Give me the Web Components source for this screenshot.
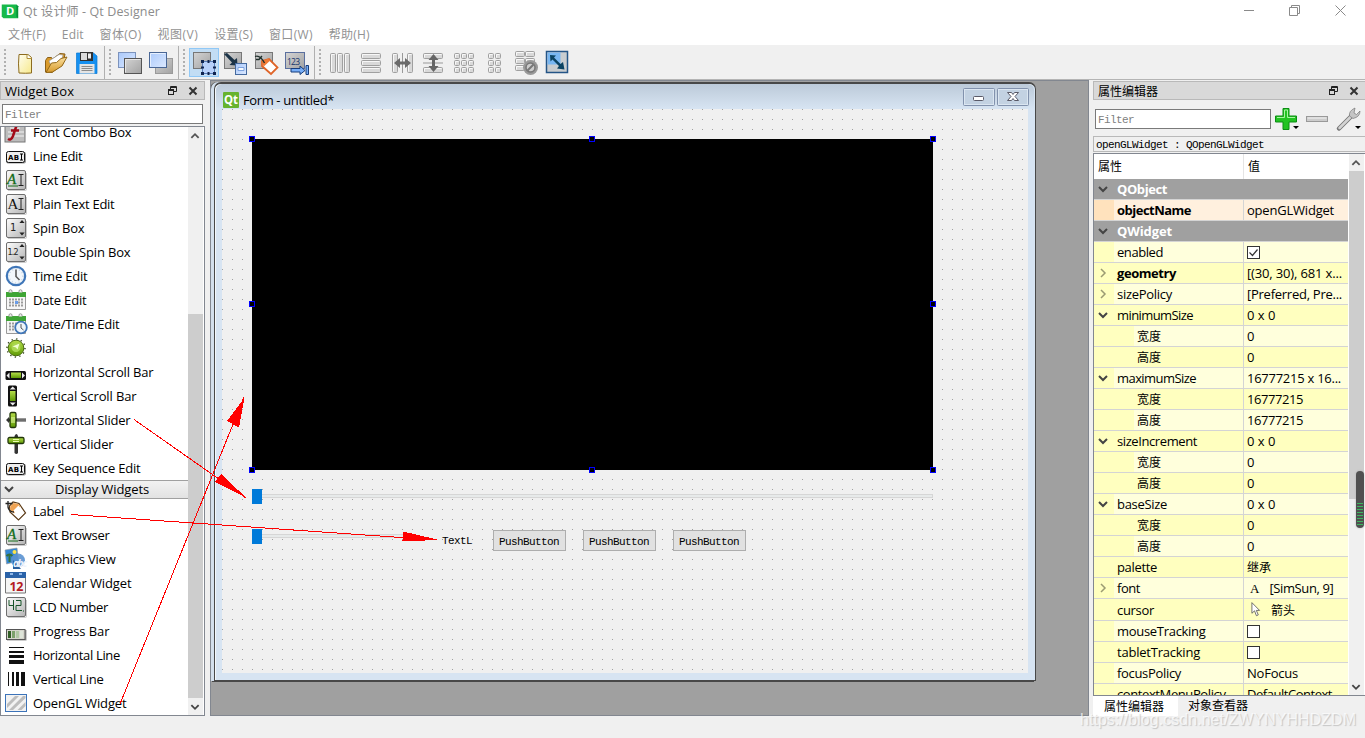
<!DOCTYPE html>
<html lang="zh">
<head>
<meta charset="utf-8">
<title>Qt 设计师 - Qt Designer</title>
<style>
  html, body { margin: 0; height: 100%; overflow: hidden; background: #f0f0f0; }
  body {
    font: 13px/1 "Open Sans", "Noto Sans CJK SC", sans-serif;
    color: #000;
  }
</style>
</head>
<body>
<designer-app></designer-app>

<script>
const DEFS = `<defs>
  <linearGradient id="g" x1="0" y1="0" x2="1" y2="1"><stop offset="0" stop-color="#fdfdfd"/><stop offset="1" stop-color="#b4b4b4"/></linearGradient>
  <linearGradient id="d" x1="0" y1="0" x2="1" y2="1"><stop offset="0" stop-color="#d4d4d4"/><stop offset="1" stop-color="#a2a2a2"/></linearGradient>
  <linearGradient id="b" x1="0" y1="0" x2="1" y2="1"><stop offset="0" stop-color="#aac9fb"/><stop offset="1" stop-color="#dce9ff"/></linearGradient>
  <linearGradient id="y" x1="0" y1="0" x2="1" y2="1"><stop offset="0" stop-color="#fffef0"/><stop offset="1" stop-color="#f7e98c"/></linearGradient>
  <linearGradient id="o" x1="0" y1="0" x2="0" y2="1"><stop offset="0" stop-color="#fbe0a0"/><stop offset="1" stop-color="#d79a2c"/></linearGradient>
  <linearGradient id="n" x1="0" y1="0" x2="0" y2="1"><stop offset="0" stop-color="#b6de4a"/><stop offset="1" stop-color="#5f9a06"/></linearGradient>
</defs>`;

const tile = '<rect x="1.5" y="1.5" width="19" height="19" rx="1.5" fill="url(#g)" stroke="#6e6e6e"/><path d="M3 21.5h17.5q1 0 1-1V4" fill="none" stroke="#aaa" opacity=".6"/>';
const abi = '<rect x="1" y="7" width="20" height="11.5" rx="2" fill="#999"/><rect x="1.5" y="6.5" width="18" height="11" rx="2" fill="#eee" stroke="#111"/><text x="3" y="14.800" font-family="DejaVu Sans" font-weight="bold" font-size="7" textLength="11">AB</text><path d="M15 9h3M15 15h3M16.5 9v6" stroke="#000" fill="none"/>';
const spin = '<path d="M17 3l2.6 3h-5.2zM17 18.600l2.600-3h-5.200z" fill="#222"/>';
const ibeam = '<path d="M13.500 5.500h5M13.500 16.500h5M16 5.500v11" stroke="#222" fill="none"/>';
const dateGrid = '<path d="M1.500 6h19v14.500h-19z" fill="#f6f6f6" stroke="#999"/><path d="M1 3h20v5H1z" fill="#3fa535"/><path d="M4 3.500v-2q1.500-1.500 3 0v2M14 3.500v-2q1.500-1.500 3 0v2" fill="#eee" stroke="#999"/><path d="M4 10.500h15M4 13.500h15M4 16.500h15" stroke="#9a9a9a" stroke-width="2" stroke-dasharray="2 1"/>';

function bars(rects) {
  return rects.map(([x, y, w, h]) => `<rect x="${x + .5}" y="${y + .5}" width="${w - 1}" height="${h - 1}" rx="1" fill="#d9d9d9" stroke="#a0a0a0"/><path d="M${x + 1.5} ${y + h - 1.5}V${y + 1.5}h${w - 3}" fill="none" stroke="#f7f7f7"/>`).join("");
}
function grid(cols, rows, w, h, px, py, ox, oy) {
  const out = [];
  for (let r = 0; r < rows; r++) for (let c = 0; c < cols; c++) out.push([ox + c * px, oy + r * py, w, h]);
  return bars(out);
}

// every glyph is drawn on a 22 x 22 grid
const ICONS = {
  logo: '<path d="M2 4h17l2 2v14h-17l-2-2z" fill="#17b94a"/><path d="M19 4l2 2v14l-2-2z" fill="#079137"/><text x="7" y="16" fill="#fff" font-family="Open Sans" font-weight="bold" font-size="13">D</text>',
  newdoc: '<path d="M5 2.500h9l3.500 3v15.500q-6 .5-12.500 0-1-9 0-18.500z" fill="url(#y)" stroke="#8c6b1f"/><path d="M13 2.500v4h4.500" fill="#fff" stroke="#b08f3a"/>',
  open: '<path d="M0.500 20V8.500l2-3h4l1 1.500L15 1.500l5 .5-2 10L7 20.500z" fill="#d99a2b" stroke="#8a5f17"/><path d="M4 9l10-6.500 4 .5-2 8-9 5z" fill="#fff" stroke="#9a9a9a" stroke-width=".7"/><path d="M1 20.500l5.500-9.500 5-.5L16 6.500l6-1.500-5 9-9.500 6z" fill="url(#o)" stroke="#946818"/>',
  save: '<path d="M.5 1h17l3.500 3v17.500H.5z" fill="#1690f0" stroke="#0878d2" stroke-width=".7"/><path d="M4 0h13v9H4z" fill="#323232"/><path d="M12 1.500h3v5h-3z" fill="#eee"/><path d="M5 1h6v7H5z" fill="#dcdcdc"/><path d="M3.500 12h15v9.500h-15z" fill="#e4e4e4"/><path d="M5.500 14.500h11M5.500 16.500h11M5.500 18.500h11" stroke="#8b8b8b"/>',
  back: '<rect x="-.500" y="0.500" width="17" height="15" fill="url(#b)" stroke="#7c93bd"/><rect x="5.500" y="6.500" width="17" height="15" fill="url(#d)" stroke="#555"/><path d="M6.500 20.500v-13h15" stroke="#e6e6e6" fill="none"/>',
  front: '<rect x="5.500" y="6.500" width="17" height="15" fill="url(#d)" stroke="#9a9a9a"/><rect x="-.500" y=".5" width="17" height="15" fill="url(#b)" stroke="#4a6796"/><path d="M.5 14.500v-13h15" stroke="#e6f0ff" fill="none"/>',
  editw: '<rect x="0.500" y="0.500" width="17" height="16" fill="url(#d)" stroke="#777"/><rect x="9.500" y="9.500" width="12" height="12" fill="#b8d1fa" stroke="#5b7fb8"/><path d="M8 8h3v3H8zM20 8h3v3h-3zM8 20h3v3H8zM20 20h3v3h-3zM14.500 8h2v3h-2zM14.500 20h2v3h-2zM8 14.500h3v2H8zM20 14.500h3v2h-3z" fill="#10244e"/>',
  editsig: '<rect x="0.500" y="0.500" width="17" height="16" fill="url(#d)" stroke="#777"/><path d="M0 2l3-1 7.500 7 2.500-2 .5 7.500-8-.5 2.500-2.500z" fill="#1c3448"/><rect x="11.500" y="11.500" width="11" height="11" fill="url(#b)" stroke="#456a9f"/><path d="M14 15.500h6v3h-6z" fill="#f8fbff" stroke="#7da3df"/>',
  editbud: '<rect x="0.500" y="0.500" width="17" height="16" fill="url(#d)" stroke="#777"/><path d="M7 9l7-2 8.500 8.500-6.500 6.500-9-8z" fill="#fff" stroke="#df6428" stroke-width="1.800"/><path d="M7 9l6-2.200 2 2-6.500 6z" fill="#ef7a35"/><path d="M0 4.500q5-2 9.500 6.500M1 7.500h3l3-3.500" stroke="#20302c" fill="none" stroke-width="1.300"/>',
  edittab: '<rect x="-0.500" y="0.500" width="19" height="16" fill="url(#d)" stroke="#5a6f9e"/><text x="1" y="12.500" font-family="Open Sans" font-size="8.500" textLength="13" fill="#17366d">123</text><path d="M5 16.500h9v-2.500l5 4.500-5 4v-2.500H5zM20 13.500h2.500v9H20z" fill="#77aef7" stroke="#173d7b"/>',
  lh: bars([[0, 1, 6, 20], [7, 1, 6, 20], [14, 1, 6, 20]]),
  lv: bars([[0, 1, 20, 6], [0, 8, 20, 6], [0, 15, 20, 6]]),
  sh: bars([[0, 1, 6, 20], [15, 1, 6, 20]]) + '<path d="M10.500 1v20" stroke="#999"/><path d="M2 11l6-5v3.500h5V6l6 5-6 5v-3.500H8V16z" fill="#6a6a6a"/>',
  sv: bars([[0, 1, 20, 6], [0, 15, 20, 6]]) + '<path d="M0 11h20" stroke="#999"/><path d="M10.500 2l5 6H12v6h3.500l-5 6-5-6H9V8H5.500z" fill="#666"/>',
  grid: grid(3, 3, 6, 6, 7, 7, 0, 1),
  formlay: grid(2, 3, 6, 6, 7, 7, 3, 1),
  breaklay: grid(2, 3, 10, 6, 10, 7, -1, -1) + '<circle cx="14.500" cy="15.500" r="7.500" fill="#999"/><circle cx="14.500" cy="15.500" r="4.500" fill="#ccc" stroke="#777" stroke-width="1.500"/><path d="M11.500 18.500l6-6" stroke="#777" stroke-width="2"/>',
  adjust: '<rect x="-.5" y="-.5" width="21" height="21" fill="#c9cdd0" stroke="#245587" stroke-width="1.500"/><path d="M.5 .5h13v12H.5z" fill="#79b7f2"/><path d="M3 3l6 .5-2 2 6.500 6.500 2.500-2 1.500 7.500-7.500-1 2-2.500L5.500 7.500l-2 2z" fill="#0b4362"/>',

  fontcombo: '<rect x="0" y="0" width="20" height="21" fill="#bdbdbd" stroke="#777"/><path d="M5 7h10M3 11h16M3 15h16" stroke="#d8d8d8" stroke-width="2"/><path d="M3 18q3 2 5-3l3-9q2-3 6-2M6 9.500h8" stroke="#a20b18" stroke-width="2.500" fill="none"/>',
  lineedit: abi,
  textedit: tile + '<text x="2" y="15" font-family="Liberation Serif" font-style="italic" font-size="15" fill="#126b19" stroke="#126b19" stroke-width=".3">A</text><path d="M3 17h10" stroke="#126b19"/>' + ibeam,
  plain: tile + '<text x="2.500" y="16" font-family="Liberation Serif" font-size="15" fill="#111">A</text>' + ibeam,
  spin: tile + '<text x="5" y="14" font-family="DejaVu Sans" font-size="10" fill="#222">1</text>' + spin,
  dspin: tile + '<text x="2.500" y="14" font-family="DejaVu Sans" font-size="8" textLength="11" fill="#222">1.2</text>' + spin,
  time: '<circle cx="11" cy="11" r="9.200" fill="#f2f7fb" stroke="#3f76b8" stroke-width="2.200"/><circle cx="11" cy="11" r="7" fill="none" stroke="#cdd9e6" stroke-width="2" stroke-dasharray="1 2.600"/><path d="M11 4.500v7l3.500 3.500" stroke="#5a5a5a" stroke-width="1.600" fill="none"/>',
  date: dateGrid + '<path d="M10 12h3v3h-3z" fill="#6a9de8"/>',
  datetime: dateGrid + '<circle cx="16" cy="14.500" r="5.800" fill="#eef5fb" stroke="#3f76b8" stroke-width="1.800"/><path d="M16 11v4l2.500 2" stroke="#555" fill="none"/>',
  dial: '<circle cx="11" cy="11" r="9" fill="none" stroke="#3a4a22" stroke-width="1.500" stroke-dasharray="1.300 3.400"/><circle cx="11" cy="11" r="7.800" fill="url(#n)" stroke="#4b6f0e"/><circle cx="11" cy="10.500" r="4.500" fill="#a9d752"/><path d="M14.500 6.500l-2 6-1.500-2-3.500-1z" fill="#f1ffd0"/>',
  hscroll: '<rect x="0.500" y="10" width="20.500" height="9" rx="1.500" fill="#111"/><path d="M6 11.500h10v5.500H6z" fill="url(#n)"/><path d="M1.500 14.500l3-3v6zM20 14.500l-3-3v6z" fill="#eee"/>',
  vscroll: '<rect x="3" y="0.500" width="9" height="21" rx="1.500" fill="#111"/><path d="M5 6h5.500v10H5z" fill="url(#n)"/><path d="M7.700 1.500l3 3h-6zM7.700 20.500l3-3h-6z" fill="#eee"/>',
  hslider: '<path d="M1 11l3-3v6zM4 9.500h17v3H4z" fill="#333"/><path d="M12 11h9" stroke="#aaa"/><rect x="5" y="3.500" width="6" height="15" rx="1.500" fill="url(#n)" stroke="#20360a" stroke-width="1.300"/><path d="M7 8v6M9 8v6" stroke="#eaffb0"/>',
  vslider: '<path d="M9.500 3q2-4 3.500 0v17q-1.500 2-3.500 0z" fill="#333"/><rect x="3" y="4.500" width="16" height="6" rx="1.500" fill="url(#n)" stroke="#20360a" stroke-width="1.300"/><path d="M8 6.500h6M8 8.500h6" stroke="#eaffb0"/>',
  label: '<path d="M4.500 6l3.500-4 6 1.500 6.500 9.500-7 7L5 12z" fill="#fff" stroke="#5b3a16" stroke-width="1.200"/><path d="M5.500 6l3-3 5 1 2 2.500-6.500 7-4-3.500z" fill="#efa354"/><path d="M8.500 10.500l5-5 5.500 7.500-5.500 5.500z" fill="#fff"/><path d="M.500 3.500h7M3 1v6q1 5 6 5" stroke="#222" fill="none" stroke-width="1.300"/>',
  gview: '<path d="M0 2l12-2 1.500 13-12 3z" fill="#3187d6" stroke="#999" stroke-width=".6"/><circle cx="9.500" cy="4" r="2" fill="#fae34a"/><path d="M4.500 14V6.500M1.500 8q3-3 6 0" stroke="#35703d" fill="none" stroke-width="2"/><circle cx="13" cy="12.500" r="7" fill="#5a92d0" opacity=".9"/><path d="M8 21v-9l8 9z" fill="#285f9d"/><text x="8" y="19" font-size="10" font-family="Open Sans" font-style="italic" font-weight="bold" fill="#eef3fc" textLength="14">abc</text>',
  calendar: '<path d="M.500 1h20v20h-20z" fill="#f5f5f5" stroke="#777"/><path d="M0 0h21v6H0z" fill="#2a62a8"/><path d="M5 2h3M14 2h3" stroke="#8fb7e9" stroke-width="2"/><text x="4.500" y="18.500" font-family="Open Sans" font-weight="bold" font-size="12.500" textLength="14" fill="#b41b22">12</text>',
  lcd: tile + '<path d="M4 4v5.500h5M8.500 4v10M11 4.500h5v5h-5v5h6M18 15h1" stroke="#175429" fill="none"/>',
  progress: '<rect x="2" y="10" width="19.500" height="10.500" fill="#999"/><rect x="1.500" y="9.500" width="18.500" height="10" fill="#d5d5cc" stroke="#555"/><path d="M3 11h3v7H3z" fill="#315e26"/><path d="M7 11h3v7H7z" fill="#7ca16b"/><path d="M11 11h3v7h-3z" fill="#b0c8a4"/><path d="M15 11h3v7h-3z" fill="#dde4d8"/>',
  hline: '<path d="M4 3.500h15" stroke="#111"/><path d="M4 8h15" stroke="#111" stroke-width="2"/><path d="M4 12.500h15" stroke="#111" stroke-width="3"/><path d="M4 18h15" stroke="#111" stroke-width="4"/>',
  vline: '<path d="M3.500 4v14" stroke="#111"/><path d="M8 4v14" stroke="#111" stroke-width="2"/><path d="M12.500 4v14" stroke="#111" stroke-width="3"/><path d="M18 4v14" stroke="#111" stroke-width="4"/>',
  opengl: '<rect x="0.500" y="2.500" width="21" height="17" fill="#f2f2f2" stroke="#3c73b9"/><path d="M2 12l8-8h4L2 16zM4 18L18 4h2.500v2L8 18zM12.500 18l8-8v4l-4 4z" fill="#bdbdbd"/>',
  plus: '<path d="M8 .500h6v7.500h7.500v6H14v7.500H8V14H.500V8H8z" fill="#22c322" stroke="#0b8d13"/><path d="M9.500 2h3v7.500H20M2 9.500h7.500V2" fill="none" stroke="#a6f5a0"/>',
  minus: '<rect x=".500" y="8.500" width="21" height="5" fill="#ccc" stroke="#999"/><path d="M1.500 10h19" stroke="#f3f3f3"/>',
  wrench: '<path d="M2 20.500L14.500 8" stroke="#777" stroke-width="4.500" stroke-linecap="round"/><path d="M2.500 20L14.500 8" stroke="#d3d3d3" stroke-width="2.500" stroke-linecap="round"/><path d="M12.500 8q-1-5 5.500-8l-1 5 2.500 1.500L23 3q0 6-7 7.500z" fill="#c4c4c4" stroke="#777" stroke-width=".7"/>',
  chevdown: '<path d="M7 9l4 4 4-4" fill="none" stroke="#444" stroke-width="2"/>',
  chevright: '<path d="M9 7l4 4-4 4" fill="none" stroke="#9b9b72" stroke-width="1.500"/>',
  chevup: '<path d="M7 13l4-4 4 4" fill="none" stroke="#555" stroke-width="2"/>',
  float: '<path d="M9.500 9V6.500h6v5H13" fill="none" stroke="#222"/><path d="M9 7.500h7" stroke="#222"/><rect x="7.500" y="9.500" width="5" height="5" fill="none" stroke="#222"/><path d="M7 10.500h6" stroke="#222"/>',
  close: '<path d="M7.500 7.500l7 7M14.500 7.500l-7 7" stroke="#333" stroke-width="2"/>',
  drop: '<path d="M8 9h6l-3 3z" fill="#000"/>',
  cursor: '<path d="M6 2v13l3.200-3 2.300 6 2.300-1-2.400-5.500h4z" fill="#fff" stroke="#555"/>',
};

class QIcon extends HTMLElement {
  constructor() {
    super();
    this.attachShadow({ mode: "open" });
  }
  connectedCallback() {
    const size = this.getAttribute("size") || 22;
    this.shadowRoot.innerHTML = `
      <style>
        :host { display: block; flex: none; width: ${size}px; height: ${size}px; }
        svg { display: block; width: 100%; height: 100%; overflow: visible; }
      </style>
      <svg viewBox="0 0 22 22">${DEFS}${ICONS[this.getAttribute("name")] || ""}</svg>`;
  }
}
customElements.define("q-icon", QIcon);

// one line of text, tracked to fill the width given in "w"
class QText extends HTMLElement {
  constructor() {
    super();
    this.attachShadow({ mode: "open" });
    this.shadowRoot.innerHTML = `
      <style>
        :host { display: inline-block; flex: none; line-height: 18px; }
        span { white-space: pre; }
      </style><span><slot></slot></span>`;
  }
  connectedCallback() {
    const want = Number(this.getAttribute("w"));
    if (!want) return;
    const span = this.shadowRoot.querySelector("span");
    const natural = span.getBoundingClientRect().width;
    span.style.letterSpacing = ((want - natural) / ([...this.textContent].length || 1)).toFixed(3) + "px";
  }
}
customElements.define("q-text", QText);

class QTitlebar extends HTMLElement {
  constructor() {
    super();
    this.attachShadow({ mode: "open" });
    this.shadowRoot.innerHTML = `
      <style>
        :host { display: flex; align-items: center; height: 24px; background: #fff; color: #8c8c8c; font-size: 12.5px; }
        q-icon { margin: -3px 4px 0 0; }
        .controls { margin-left: auto; display: flex; margin-top: -4px; margin-right: 18px; }
        svg { display: block; fill: none; stroke: #8a8a8a; }
      </style>
      <q-icon name="logo" size="19"></q-icon>
      <q-text w="137">Qt 设计师 - Qt Designer</q-text>
      <div class="controls">
        <svg width="103" height="12"><path d="M0 6.500h10M45.500 3.500h8v8h-8zM47.500 3.500v-2h8v8h-2M91.500 1.500l10 10M101.500 1.500l-10 10"/></svg>
      </div>`;
  }
}
customElements.define("q-titlebar", QTitlebar);

class QMenubar extends HTMLElement {
  constructor() {
    super();
    this.attachShadow({ mode: "open" });
    const items = [["文件(F)", 38], ["Edit", 22], ["窗体(O)", 42], ["视图(V)", 41], ["设置(S)", 39], ["窗口(W)", 44], ["帮助(H)", 41]];
    this.shadowRoot.innerHTML = `
      <style>
        :host { display: flex; align-items: center; gap: 15.8px; height: 21px; padding-left: 8px; background: #fff; color: #929292; font-size: 12px; border-bottom: 1px solid #f0f0f0; }
      </style>
      ${items.map(([t, w]) => `<q-text w="${w}">${t}</q-text>`).join("")}`;
  }
}
customElements.define("q-menubar", QMenubar);

class QToolbar extends HTMLElement {
  constructor() {
    super();
    this.attachShadow({ mode: "open" });
    const groups = [
      ["newdoc", "open", "save"],
      ["back", "front"],
      ["editw*", "editsig", "editbud", "edittab"],
      ["lh", "lv", "sh", "sv", "grid", "formlay", "breaklay", "adjust"],
    ];
    this.shadowRoot.innerHTML = `
      <style>
        :host { display: flex; height: 33px; background: #f0f0f0; border-bottom: 1px solid #b4b4b4; }
        .group { display: flex; align-items: center; padding-right: 1px; border-right: 1px solid #b0b0b0; }
        .group:last-child { border-right: 0; }
        .group:last-child .handle { margin-right: 5px; }
        .handle { width: 2px; height: 27px; margin: 0 4px; background: repeating-linear-gradient(#b0b0b0 0 2px, #f0f0f0 2px 4px); }
        .btn { box-sizing: border-box; width: 30px; height: 29px; margin-right: 1px; border: 1px solid transparent; display: flex; align-items: center; justify-content: center; }
        .btn.on { background: #c2ddf4; border-color: #90c8f6; }
      </style>
      ${groups.map(g => `<div class="group"><div class="handle"></div>${g.map(n => `
        <div class="btn${n.endsWith("*") ? " on" : ""}"><q-icon name="${n.replace("*", "")}"></q-icon></div>`).join("")}</div>`).join("")}`;
  }
}
customElements.define("q-toolbar", QToolbar);

class QDockTitle extends HTMLElement {
  constructor() {
    super();
    this.attachShadow({ mode: "open" });
    this.shadowRoot.innerHTML = `
      <style>
        :host { display: flex; align-items: center; height: 17px; background: #d9d9d9; border: 1px solid #b9b9b9; padding-left: 4px; }
        .b { margin-left: auto; display: flex; }
        q-icon + q-icon { margin-left: -1px; }
      </style>
      <slot></slot>
      <div class="b"><q-icon name="float"></q-icon><q-icon name="close"></q-icon></div>`;
  }
}
customElements.define("q-dock-title", QDockTitle);

class QFilter extends HTMLElement {
  constructor() {
    super();
    this.attachShadow({ mode: "open" });
    this.shadowRoot.innerHTML = `
      <style>
        :host { display: flex; align-items: center; flex: none; box-sizing: border-box; height: 20px; padding: 2px 0 0 2px; background: #fff; border: 1px solid #7a7a7a; color: #808080; font: 11px "Liberation Mono", monospace; }
      </style>
      <q-text w="36">Filter</q-text>`;
  }
}
customElements.define("q-filter", QFilter);

class QScrollbar extends HTMLElement {
  constructor() {
    super();
    this.attachShadow({ mode: "open" });
  }
  connectedCallback() {
    this.shadowRoot.innerHTML = `
      <style>
        :host { display: flex; flex-direction: column; width: 15px; flex: none; background: #f0f0f0; align-items: center; }
        .space { flex: none; height: ${this.getAttribute("before")}px; }
        .thumb { flex: none; width: 100%; height: ${this.getAttribute("thumb")}px; background: #cdcdcd; }
        .end { height: 17px; display: flex; align-items: center; margin-left: -1px; }
        .last { margin-top: auto; }
      </style>
      <div class="end"><q-icon name="chevup" size="20"></q-icon></div>
      <div class="space"></div><div class="thumb"></div>
      <div class="end last"><q-icon name="chevdown" size="20"></q-icon></div>`;
  }
}
customElements.define("q-scrollbar", QScrollbar);

class WidgetBox extends HTMLElement {
  constructor() {
    super();
    this.attachShadow({ mode: "open" });
    const inputs = [
      ["fontcombo", "Font Combo Box", 98.5], ["lineedit", "Line Edit", 49.5], ["textedit", "Text Edit", 50.5],
      ["plain", "Plain Text Edit", 81.5], ["spin", "Spin Box", 51.5], ["dspin", "Double Spin Box", 97.5],
      ["time", "Time Edit", 54.5], ["date", "Date Edit", 53.5], ["datetime", "Date/Time Edit", 86.5],
      ["dial", "Dial", 22], ["hscroll", "Horizontal Scroll Bar", 120.5], ["vscroll", "Vertical Scroll Bar", 103.5],
      ["hslider", "Horizontal Slider", 97.5], ["vslider", "Vertical Slider", 80.5], ["lineedit", "Key Sequence Edit", 107.5],
    ];
    const display = [
      ["label", "Label", 31], ["textedit", "Text Browser", 76.5], ["gview", "Graphics View", 82.5],
      ["calendar", "Calendar Widget", 98.5], ["lcd", "LCD Number", 75], ["progress", "Progress Bar", 76.5],
      ["hline", "Horizontal Line", 87], ["vline", "Vertical Line", 70.5], ["opengl", "OpenGL Widget", 93.5],
    ];
    const row = ([icon, text, w]) => `<div class="row"><q-icon name="${icon}"></q-icon><q-text w="${w}">${text}</q-text></div>`;
    this.shadowRoot.innerHTML = `
      <style>
        :host { display: flex; flex-direction: column; width: 205px; box-sizing: border-box; padding-top: 1px; }
        q-filter { margin: 4px 2px 2px; }
        .list { flex: 1; min-height: 0; display: flex; border: 1px solid #828790; background: #fff; overflow: hidden; }
        .rows { flex: 1; margin-top: -7px; }
        .row { display: flex; align-items: center; height: 24px; gap: 6px; padding-left: 4px; }
        .head { display: flex; align-items: center; height: 17px; border-top: 1px solid #a0a0a0; border-bottom: 1px solid #a0a0a0; background: linear-gradient(#f2f2f2, #e2e2e2); }
        .head q-icon { margin: -1px 35px 0 -3px; }
        .head q-text { margin-top: -2px; }
        q-scrollbar { margin-right: 1px; }
      </style>
      <q-dock-title><q-text w="69">Widget Box</q-text></q-dock-title>
      <q-filter></q-filter>
      <div class="list">
        <div class="rows">
          ${inputs.map(row).join("")}
          <div class="head"><q-icon name="chevdown"></q-icon><q-text w="94">Display Widgets</q-text></div>
          ${display.map(row).join("")}
        </div>
        <q-scrollbar before="170" thumb="384"></q-scrollbar>
      </div>`;
  }
}
customElements.define("widget-box", WidgetBox);

class FormButton extends HTMLElement {
  constructor() {
    super();
    this.attachShadow({ mode: "open" });
    this.shadowRoot.innerHTML = `
      <style>
        :host { display: flex; align-items: center; justify-content: center; box-sizing: border-box; width: 73px; height: 21px; padding: 2px 1px 0 0; background: #e1e1e1; border: 1px solid #adadad; }
      </style>
      <q-text><slot></slot></q-text>`;
  }
}
customElements.define("form-button", FormButton);

class FormSlider extends HTMLElement {
  constructor() {
    super();
    this.attachShadow({ mode: "open" });
    this.shadowRoot.innerHTML = `
      <style>
        :host { display: flex; align-items: center; height: 15px; }
        .knob { width: 10px; height: 15px; background: #007ad9; }
        .groove { flex: 1; height: 2px; margin-top: -1px; background: #e7eaea; border: 1px solid #d6d6d6; border-left: 0; }
      </style>
      <div class="knob"></div><div class="groove"></div>`;
  }
}
customElements.define("form-slider", FormSlider);

class FormWindow extends HTMLElement {
  constructor() {
    super();
    this.attachShadow({ mode: "open" });
    const handles = [];
    for (const y of [30, 195, 361]) for (const x of [30, 370, 711]) {
      if (x !== 370 || y !== 195) handles.push(`<i style="left:${x - 3}px;top:${y - 3}px"></i>`);
    }
    this.shadowRoot.innerHTML = `
      <style>
        :host { display: flex; flex-direction: column; position: relative; box-sizing: border-box; width: 822px; height: 599px; background: #d7e4f2; border: 1px solid #484848; border-top-width: 2px; border-radius: 7px 7px 0 0; padding: 0 7px 7px; box-shadow: inset 1px 1px #f4f8fc, -3px 0 #d3dfec, -4px 0 #555, -2px 1px #484848; }
        .bar { height: 25px; flex: none; display: flex; align-items: center; margin: 0 -6px; padding: 0 5px 0 6px; background: linear-gradient(#bccad9, #d7e4f2); border-radius: 6px 6px 0 0; }
        .qt { width: 16px; height: 16px; border-radius: 1px; background: #67b32e; margin-top: 6px; margin-left: 1px; margin-right: 4px; }
        .bar q-text { margin-top: 6px; }
        .btns { margin-left: auto; display: flex; gap: 2px; margin-top: 1px; }
        .btns svg { display: block; }
        .canvas { flex: 1; position: relative; background: #f0f0f0; overflow: hidden; }
        .dots { width: 100%; height: 100%; display: block; }
        .canvas > :not(.dots) { position: absolute; }
        .gl { left: 30px; top: 30px; width: 681px; height: 331px; background: #000; }
        i { box-sizing: border-box; width: 6px; height: 6px; background: #000; border: 1px solid #00f; }
        .mono { font: 11px "Liberation Mono", monospace; letter-spacing: -0.6px; }
      </style>
      <div class="bar">
        <svg class="qt" viewBox="0 0 16 16"><text x="1" y="12" fill="#fff" font-family="Open Sans" font-weight="bold" font-size="12" textLength="14" lengthAdjust="spacingAndGlyphs">Qt</text></svg>
        <q-text w="91">Form - untitled*</q-text>
        <div class="btns">
          <svg width="32" height="18"><rect x=".500" y=".500" width="31" height="17" rx="1" fill="#c3d2e2" stroke="#8292ad"/><rect x="1.500" y="1.500" width="29" height="15" fill="none" stroke="#dbe6f1"/><rect x="10.500" y="8.500" width="10" height="4" rx="1" fill="#fff" stroke="#5a5a68"/></svg>
          <svg width="32" height="18"><rect x=".500" y=".500" width="31" height="17" rx="1" fill="#c3d2e2" stroke="#8292ad"/><rect x="1.500" y="1.500" width="29" height="15" fill="none" stroke="#dbe6f1"/><path d="M10.500 4.500h4l1.500 2 1.500-2h4l-3.500 4 3.500 4h-4L16 10.500l-1.500 2h-4l3.500-4z" fill="#fff" stroke="#5a5a68"/></svg>
        </div>
      </div>
      <div class="canvas">
        <svg class="dots"><defs><pattern id="p" width="10" height="10" patternUnits="userSpaceOnUse"><rect width="1" height="1" fill="#a0a0a0"/></pattern></defs><rect width="100%" height="100%" fill="url(#p)"/></svg>
        <div class="gl"></div>
        ${handles.join("")}
        <form-slider style="left:30px;top:380px;width:681px"></form-slider>
        <form-slider style="left:30px;top:420px;width:160px"></form-slider>
        <q-text class="mono" style="left:220px;top:423px;line-height:18px">TextL</q-text>
        <form-button class="mono" style="left:271px;top:421px">PushButton</form-button>
        <form-button class="mono" style="left:361px;top:421px">PushButton</form-button>
        <form-button class="mono" style="left:451px;top:421px">PushButton</form-button>
      </div>`;
  }
}
customElements.define("form-window", FormWindow);

class MdiArea extends HTMLElement {
  constructor() {
    super();
    this.attachShadow({ mode: "open" });
    this.shadowRoot.innerHTML = `
      <style>
        :host { display: block; box-sizing: border-box; width: 879px; background: #a0a0a0; border: 1px solid #828790; padding: 1px 0 0 3px; overflow: hidden; }
      </style>
      <slot></slot>`;
  }
}
customElements.define("mdi-area", MdiArea);

class PropertyRow extends HTMLElement {
  constructor() {
    super();
    this.attachShadow({ mode: "open" });
  }
  connectedCallback() {
    const a = n => this.getAttribute(n) || "";
    const kind = a("kind");
    const shade = { group: "#a0a0a0", name: "#fff0de", light: "#ffffdc", dark: "#ffffbf" }[a("shade")];
    const indent = { group: "#a0a0a0", name: "#ffe2bd" }[a("shade")] || "#ffffbf";
    const child = kind === "child";
    let value = `<slot></slot>`;
    if (kind === "check" || kind === "checked") {
      value = `<svg width="13" height="13"><rect x=".500" y=".500" width="12" height="12" fill="#fff" stroke="#333"/>${kind === "checked" ? '<path d="M2.500 6.500l3 3 5-6" fill="none" stroke="#333" stroke-width="1.200"/>' : ""}</svg>`;
    }
    this.shadowRoot.innerHTML = `
      <style>
        :host { display: flex; box-sizing: border-box; flex: none; height: ${a("h") || 21}px; background: ${shade}; border-bottom: 1px solid #d4d4d4; }
        .in { width: ${child ? 40 : 20}px; background: ${indent}; display: flex; align-items: center; }
        .in q-icon { margin: -1px 0 0 -2px; }
        .n { box-sizing: border-box; width: ${child ? 110 : 130}px; display: flex; align-items: center; padding: ${child ? 2 : 0}px 0 0 3px; border-right: 1px solid ${a("shade") === "group" ? "transparent" : "#d4d4d4"}; font-weight: ${a("bold") ? 700 : 400}; color: ${a("shade") === "group" ? "#fff" : "#000"}; font-size: ${child ? 12 : 13}px; }
        .v { flex: 1; display: flex; align-items: center; padding-left: 3px; overflow: hidden; }
      </style>
      <div class="in">${a("open") ? `<q-icon name="chev${a("open")}"></q-icon>` : ""}</div>
      <div class="n"><q-text w="${a("nw")}">${a("name")}</q-text></div>
      <div class="v">${value}</div>`;
  }
}
customElements.define("property-row", PropertyRow);

class PropertyEditor extends HTMLElement {
  constructor() {
    super();
    this.attachShadow({ mode: "open" });
    const zero = '<q-text w="7">0</q-text>';
    const zeros = '<q-text w="28.5">0 x 0</q-text>';
    const big = '<q-text w="56">16777215</q-text>';
    // name, name width, attributes, value
    const rows = [
      ["QObject", 50, 'shade="group" bold="1" open="down"', ""],
      ["objectName", 74, 'shade="name" bold="1"', '<q-text w="87">openGLWidget</q-text>'],
      ["QWidget", 55, 'shade="group" bold="1" open="down"', ""],
      ["enabled", 46, 'shade="light" kind="checked"', ""],
      ["geometry", 59, 'shade="dark" bold="1" open="right"', '<q-text w="95">[(30, 30), 681 x...</q-text>'],
      ["sizePolicy", 55, 'shade="light" open="right"', '<q-text w="95">[Preferred, Pre...</q-text>'],
      ["minimumSize", 76, 'shade="dark" open="down"', zeros],
      ["宽度", 24, 'shade="light" kind="child"', zero],
      ["高度", 24, 'shade="dark" kind="child"', zero],
      ["maximumSize", 79, 'shade="light" open="down"', '<q-text w="94">16777215 x 16...</q-text>'],
      ["宽度", 24, 'shade="dark" kind="child"', big],
      ["高度", 24, 'shade="light" kind="child"', big],
      ["sizeIncrement", 80, 'shade="dark" open="down"', zeros],
      ["宽度", 24, 'shade="light" kind="child"', zero],
      ["高度", 24, 'shade="dark" kind="child"', zero],
      ["baseSize", 50, 'shade="light" open="down"', zeros],
      ["宽度", 24, 'shade="dark" kind="child"', zero],
      ["高度", 24, 'shade="light" kind="child"', zero],
      ["palette", 40, 'shade="dark"', '<q-text class="cjk">继承</q-text>'],
      ["font", 23, 'shade="light" open="right"', '<q-text class="fa">A</q-text><q-text w="64">[SimSun, 9]</q-text>'],
      ["cursor", 37, 'shade="dark" h="22"', '<q-icon name="cursor" size="18"></q-icon><q-text class="cjk" style="margin-left:6px">箭头</q-text>'],
      ["mouseTracking", 88.5, 'shade="light" kind="check"', ""],
      ["tabletTracking", 83, 'shade="dark" kind="check"', ""],
      ["focusPolicy", 64, 'shade="light"', '<q-text w="51">NoFocus</q-text>'],
      ["contextMenuPolicy", 108.5, 'shade="dark"', '<q-text w="85">DefaultContext</q-text>'],
    ];
    this.shadowRoot.innerHTML = `
      <style>
        :host { display: flex; flex-direction: column; width: 272px; box-sizing: border-box; padding-top: 1px; }
        .cjk, .tabs, q-dock-title { font-size: 12px; }
        .cjk { padding-top: 2px; }
        q-dock-title { margin-right: -1px; }
        q-dock-title q-text { padding-top: 2px; }
        .tools { display: flex; align-items: center; height: 22px; margin: 8px 0 6px 2px; }
        q-filter { width: 176px; margin-right: 4px; }
        .tools q-icon { margin-right: 9px; }
        .tools .t { position: relative; }
        .t .drop { position: absolute; left: 10px; top: 9px; }
        .object { display: flex; align-items: center; box-sizing: border-box; height: 16px; border: 1px solid #b9b9b9; border-right: 0; padding: 2px 0 0 2px; font: 11px "Liberation Mono", monospace; }
        .table { display: flex; height: 541px; border: 1px solid #828790; border-right: 0; margin-top: 1px; background: #fff; box-sizing: content-box; overflow: hidden; }
        .rows { width: 254px; margin-right: 1px; overflow: hidden; }
        .th { display: flex; height: 25px; font-size: 12px; align-items: center; background: #fff; }
        .th div { box-sizing: border-box; height: 25px; display: flex; align-items: center; padding-left: 4px; width: 150px; border-right: 1px solid #e5e5e5; }
        .th div + div { border: 0; padding-left: 4px; width: 60px; }
        .fa { font-family: "Liberation Serif", serif; margin: 0 10px 0 3px; padding-top: 2px; font-size: 13px; }
        .tabs { display: flex; height: 20px; }
        .tabs div { box-sizing: border-box; display: flex; align-items: center; padding: 2px 11px 0 11px; height: 20px; }
        .tabs .on { background: #fff; width: 85px; }
        .tabs div + div { padding: 0 10px; }
      </style>
      <q-dock-title><q-text>属性编辑器</q-text></q-dock-title>
      <div class="tools">
        <q-filter></q-filter>
        <div class="t"><q-icon name="plus"></q-icon><q-icon class="drop" name="drop"></q-icon></div>
        <q-icon name="minus"></q-icon>
        <div class="t"><q-icon name="wrench"></q-icon><q-icon class="drop" name="drop"></q-icon></div>
      </div>
      <div class="object"><q-text w="168">openGLWidget : QOpenGLWidget</q-text></div>
      <div class="table">
        <div class="rows">
          <div class="th"><div>属性</div><div>值</div></div>
          ${rows.map(([n, w, attrs, v]) => `<property-row name="${n}" nw="${w}" ${attrs}>${v}</property-row>`).join("")}
        </div>
        <q-scrollbar before="0" thumb="328"></q-scrollbar>
      </div>
      <div class="tabs"><div class="on">属性编辑器</div><div>对象查看器</div></div>`;
  }
}
customElements.define("property-editor", PropertyEditor);

// red pointers drawn across the whole window
class ArrowLayer extends HTMLElement {
  constructor() {
    super();
    this.attachShadow({ mode: "open" });
    this.shadowRoot.innerHTML = `
      <style>
        :host { position: absolute; inset: 0; pointer-events: none; }
        svg { display: block; }
        .bar { position: absolute; left: 1356px; top: 471px; width: 8px; height: 57px; border-radius: 4px; background: #505050; box-shadow: 0 0 2px #aaa; }
        .bar::after { content: ""; position: absolute; left: 1px; top: 32px; width: 6px; height: 23px; background: repeating-linear-gradient(#3fb560 0 1px, #505050 1px 3px); }
        .mark { position: absolute; left: 1080px; top: 710px; font: 16px/20px "Liberation Sans", sans-serif; color: rgba(255,255,255,.7); text-shadow: 1px 1px 1px rgba(130,130,130,.4); }
      </style>
      <svg width="1365" height="738" fill="#f00" stroke="#f00" shape-rendering="crispEdges">
        <path d="M134 419.500L246 498M71 514.500L437 540M120 704L244 397" fill="none"/>
        <path d="M246 497.500L221 474 215 482zM437 539.500L403 531.500 402.500 540.500 419 541zM244.500 397.500L227 421 239 427.500z" stroke="none"/>
      </svg>
      <div class="bar"></div>
      <q-text class="mark" w="276">https://blog.csdn.net/ZWYNYHHDZDM</q-text>`;
  }
}
customElements.define("arrow-layer", ArrowLayer);

class DesignerApp extends HTMLElement {
  constructor() {
    super();
    this.attachShadow({ mode: "open" });
    this.shadowRoot.innerHTML = `
      <style>
        :host { display: flex; flex-direction: column; position: relative; width: 1365px; height: 738px; overflow: hidden; background: #f0f0f0; }
        main { display: flex; height: 636px; }
        mdi-area { margin: 0 4px 0 5px; }
      </style>
      <q-titlebar></q-titlebar>
      <q-menubar></q-menubar>
      <q-toolbar></q-toolbar>
      <main>
        <widget-box></widget-box>
        <mdi-area><form-window></form-window></mdi-area>
        <property-editor></property-editor>
      </main>
      <arrow-layer></arrow-layer>`;
  }
}
customElements.define("designer-app", DesignerApp);
</script>
</body>
</html>
